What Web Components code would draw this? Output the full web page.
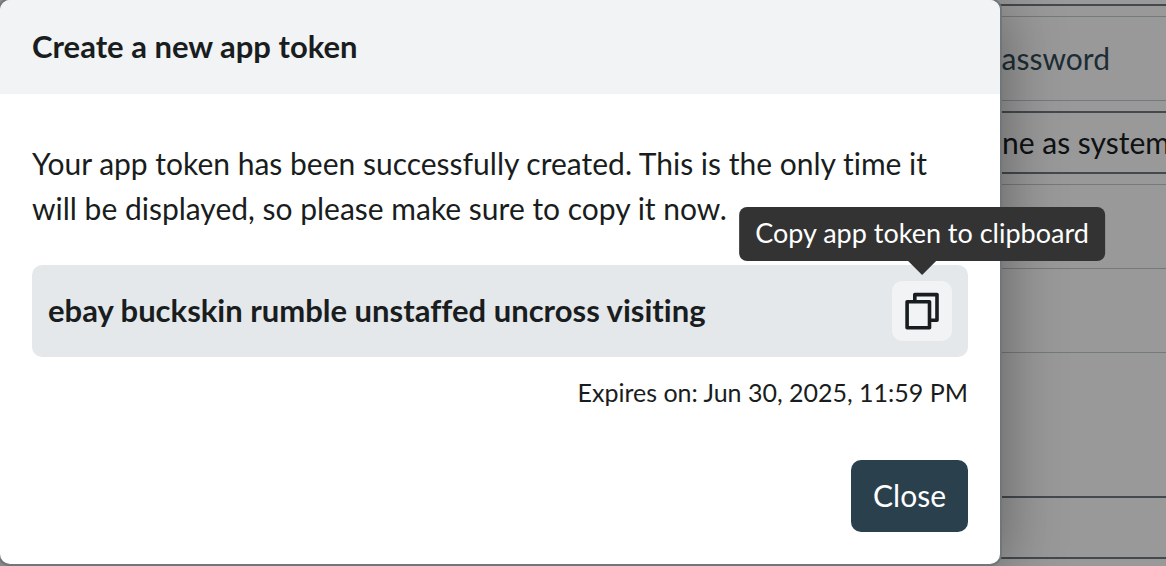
<!DOCTYPE html>
<html lang="en">
<head>
<meta charset="utf-8">
<title>Create a new app token</title>
<style>
  html, body { height: 100%; margin: 0; }
  body { background: #999; color: #191d20; font-family: Lato, "Open Sans", sans-serif; font-size: 30px; font-variant-ligatures: none; overflow: hidden; }
</style>
</head>
<body>
<token-screen></token-screen>

<script>
const define = (name, markup) => customElements.define(name, class extends HTMLElement {
  constructor() {
    super();
    this.attachShadow({ mode: "open" }).innerHTML = markup;
  }
});

define("copy-button", `
  <style>
    :host { display: block; position: relative; flex: none; }
    button { display: grid; place-items: center; width: 60px; height: 60px; padding: 0; border: 0; border-radius: 10px; background: #f1f3f5; color: #191d20; cursor: pointer; }
    .tip { position: absolute; left: 50%; bottom: calc(100% + 20px); transform: translateX(-50%); box-sizing: border-box; height: 54px; padding: 0 16px; border-radius: 8px; background: #333; color: #fff; font-size: 27px; line-height: 52px; white-space: nowrap; }
    .tip::after { content: ""; position: absolute; top: 100%; left: 50%; margin-left: -14px; border: 14px solid transparent; border-top-color: #333; border-bottom: 0; }
  </style>
  <button type="button" aria-labelledby="tip">
    <svg width="36" height="38" viewBox="0 0 36 38" fill="none" stroke="currentColor" stroke-width="3.6" stroke-linejoin="round" aria-hidden="true">
      <path d="M10.8 10V2.6H33V28.2H26"/>
      <rect x="3.1" y="9.8" width="22.4" height="26"/>
    </svg>
  </button>
  <div class="tip" id="tip" role="tooltip"><slot></slot></div>
`);

define("token-field", `
  <style>
    :host { display: flex; align-items: center; justify-content: space-between; gap: 16px; padding: 16px; border-radius: 10px; background: #e4e8eb; }
    strong { font-size: 31px; font-weight: 700; line-height: 44px; padding-bottom: 2px; }
  </style>
  <strong><slot></slot></strong>
  <copy-button>Copy app token to clipboard</copy-button>
`);

define("app-button", `
  <style>
    :host { display: block; }
    button { height: 72px; padding: 0 22px 2px; border: 0; border-radius: 10px; background: #2a414d; color: #fff; font: inherit; cursor: pointer; }
  </style>
  <button type="button"><slot></slot></button>
`);

define("modal-dialog", `
  <style>
    :host { display: block; border-radius: 10px; background: #fff; box-shadow: 0 0 0 2px #6f777b, 0 8px 64px rgba(0,0,0,.4); }
    header { padding: 23px 32px 25px; border-radius: 10px 10px 0 0; background: #f1f3f5; }
    h1 { margin: 0; font-size: 31px; line-height: 46px; font-weight: 700; }
    .body { padding: 47px 32px 0; }
    footer { display: flex; justify-content: flex-end; padding: 48px 32px 32px; }
  </style>
  <header><h1><slot name="title"></slot></h1></header>
  <div class="body"><slot></slot></div>
  <footer><slot name="actions"></slot></footer>
`);

define("settings-row", `
  <style>
    :host { display: flex; box-sizing: border-box; height: 84px; align-items: center; overflow: hidden; white-space: nowrap; border-bottom: 1px solid #74797b; color: #1c2d35; }
    :host([kind="field"]) { height: 63px; margin: 10px 0; padding: 0 0 2px 2px; border: solid #43494d; border-width: 2px 0; color: #0f1113; }
    :host([kind="link"]) { padding: 0 56px 2px 0; justify-content: flex-end; border-top: 1px solid #74797b; height: 85px; }
    :host([kind="first"]) { height: 6px; margin-bottom: 10px; border-bottom: 2px solid #43494d; }
    :host([kind="line"]) { height: 1px; }
    :host([kind="space"]) { height: 133px; border: 0; }
  </style>
  <slot></slot>
`);

define("settings-page", `
  <style>
    :host { display: block; overflow: hidden; background: #999; }
    a { color: inherit; text-decoration: none; }
  </style>
  <settings-row kind="first"></settings-row>
  <settings-row kind="link"><a href="#password">assword</a></settings-row>
  <settings-row kind="field">ne as system</settings-row>
  <settings-row kind="line"></settings-row>
  <settings-row></settings-row>
  <settings-row></settings-row>
  <settings-row kind="space"></settings-row>
  <settings-row kind="field"></settings-row>
`);

define("token-screen", `
  <style>
    :host { display: grid; grid-template-columns: minmax(0, 1fr) 166px; height: 100%; align-items: start; }
    modal-dialog { position: relative; z-index: 1; }
    settings-page { height: 100%; }
    p { margin: 0; line-height: 45px; }
    token-field { margin: 34px 0 16px; }
    .expires { font-size: 25px; line-height: 39px; text-align: right; }
  </style>
  <modal-dialog role="dialog" aria-label="Create a new app token">
    <span slot="title">Create a new app token</span>
    <p>Your app token has been successfully created. This is the only time it will be displayed, so please make sure to copy it now.</p>
    <token-field>ebay buckskin rumble unstaffed uncross visiting</token-field>
    <p class="expires">Expires on: Jun 30, 2025, 11:59 PM</p>
    <app-button slot="actions">Close</app-button>
  </modal-dialog>
  <settings-page></settings-page>
`);
</script>
</body>
</html>
